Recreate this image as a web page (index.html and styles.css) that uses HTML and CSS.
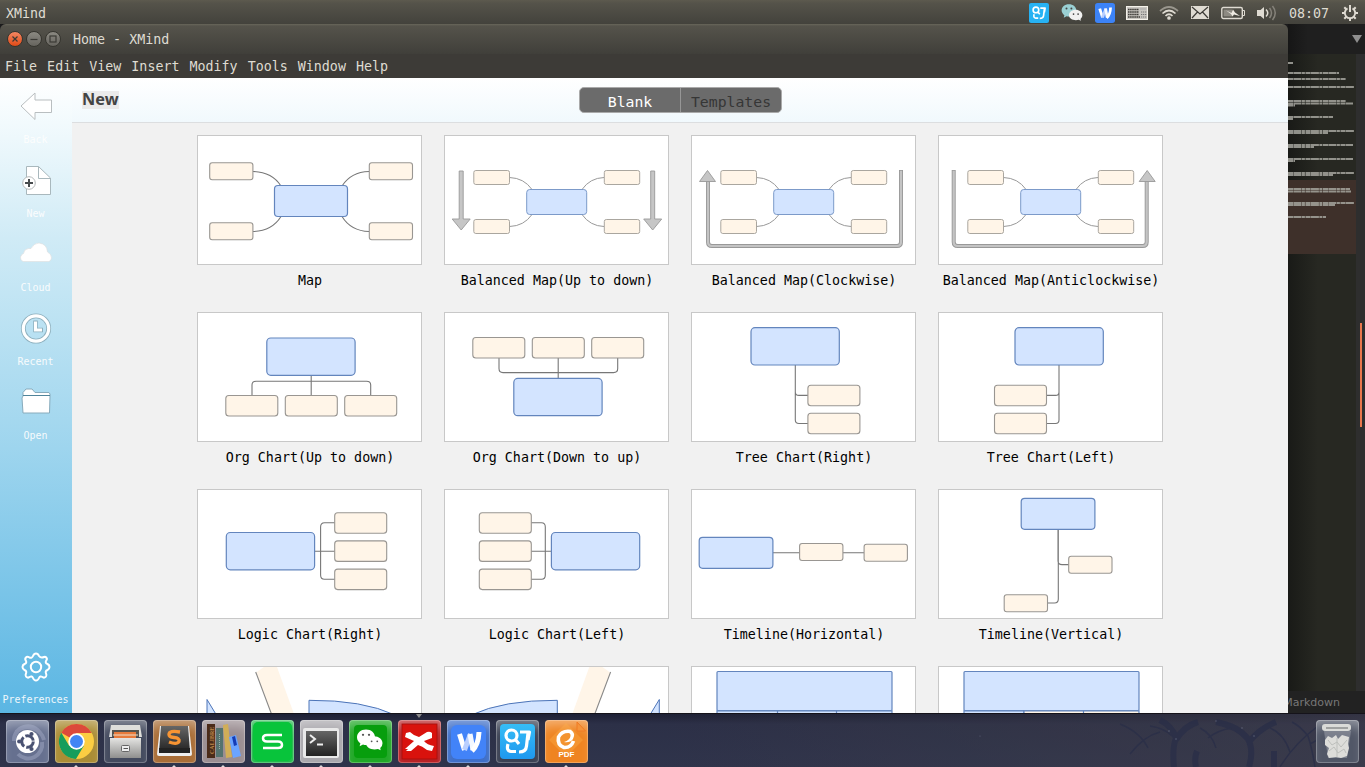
FILE: index.html
```
<!DOCTYPE html>
<html lang="en">
<head>
<meta charset="utf-8">
<title>Home - XMind</title>
<link rel="stylesheet" href="styles.css">
</head>
<body>
<svg class="defs" width="0" height="0">
  <defs>
    <linearGradient id="metal" x1="0" y1="0" x2="0" y2="1"><stop offset="0" stop-color="#e4e4e2"/><stop offset="1" stop-color="#8f8f8e"/></linearGradient>
    <linearGradient id="dark" x1="0" y1="0" x2="0" y2="1"><stop offset="0" stop-color="#666"/><stop offset="1" stop-color="#222"/></linearGradient>
    <linearGradient id="sky" x1="0" y1="0" x2="0" y2="1"><stop offset="0" stop-color="#36bdf6"/><stop offset="1" stop-color="#1f98ef"/></linearGradient>
    <linearGradient id="haze" x1="0" y1="0" x2="1" y2="0"><stop offset="0" stop-color="#3d3c48" stop-opacity="0"/><stop offset="1" stop-color="#42404c" stop-opacity=".75"/></linearGradient>
    <g id="balanced">
      <g class="wire faint"><path d="M65.500 42.500Q80 43 88 54.500M65.500 91.500Q80 91 88 79.500M160 42.500Q146 43 138 54.500M160 91.500Q146 91 138 79.500"/></g>
      <g class="topic faint"><rect x="29.800" y="35.500" width="35.700" height="14" rx="2"/><rect x="29.800" y="84.500" width="35.700" height="14" rx="2"/><rect x="160.300" y="35.500" width="35.400" height="14" rx="2"/><rect x="160.300" y="84.500" width="35.400" height="14" rx="2"/></g>
      <g class="central faint"><rect x="82.700" y="54.500" width="60" height="25" rx="3"/></g>
    </g>
    <g id="down-arrow"><path d="M-2 36H2V84H9L0 95L-9 84H-2Z"/></g>
    <g id="clock-arrow">
      <path d="M17 46V107Q17 111 21 111H206Q210 111 210 107V35" fill="none" stroke="#999" stroke-width="4"/>
      <path d="M17 46V107Q17 111 21 111H206Q210 111 210 107V35.700" fill="none" stroke="#c4c4c4" stroke-width="2.200"/>
      <path d="M16.500 35.500L8.500 46.500H24.500Z" fill="#c6c6c6" stroke="#999" stroke-width=".9"/>
    </g>
    <g id="fish">
      <path d="M59 6.500L67 1H80L97 48H74Z" fill="#fff5e8"/>
      <path d="M58.700 6L74.500 48" fill="none" stroke="#888" stroke-width="1.100"/>
      <path d="M10 50V33.500L20 50M112 50V34.300Q166 34 198 49" fill="#d3e4ff" stroke="#4c74b8"/>
    </g>
    <g id="gq-mark" fill="none" stroke="#fff" stroke-width="3.200" stroke-linejoin="round">
      <circle cx="15.500" cy="15.500" r="5.500"/><path d="M19 19L23 24M12 24Q10 31 15 31.500H20M23 32Q30 32 30.500 26L32 13M24 12H33.500L32 20"/>
    </g>
    <g id="w-mark" fill="none" stroke-width="5"><path d="M12.500 14L17.500 30" stroke="#fff"/><path d="M17.500 30L23.500 14" stroke="#b9cfff"/><path d="M23 14L26 30" stroke="#f4f8ff"/><path d="M25 31Q31.500 25 32 12" stroke="#fff"/></g>
    <g id="bubbles">
      <path d="M14 9C7 9 2 13.500 2 19C2 22.500 4 25 6.500 27L5.500 31L10 28.500Q13 29.500 16 29C22 28 26 24 26 19C26 13.500 21 9 14 9Z"/>
      <path class="bubble-front" d="M25 18C31 18 36 22 36 27Q36 31 33 33L33.500 36L30 34.500C22 36.500 14 33 14 27C14 22 19 18 25 18Z"/>
      <g fill="#555"><circle cx="10" cy="16" r="1.500"/><circle cx="18" cy="16" r="1.500"/><circle cx="21.500" cy="24.500" r="1.200"/><circle cx="29" cy="24.500" r="1.200"/></g>
    </g>
  </defs>
</svg>

<header class="panel">
  <span class="panel-title">XMind</span>
  <div class="tray">
    <svg width="20" height="20" viewBox="2 2 39 39"><rect x="2" y="2" width="39" height="39" rx="4" fill="#27b2f3"/><use href="#gq-mark"/></svg>
    <svg width="22" height="19" viewBox="1 8 36 29" fill="#9ad0d3"><path d="M14 9C7 9 2 13.500 2 19C2 22.500 4 25 6.500 27L5.500 31L10 28.500Q13 29.500 16 29C22 28 26 24 26 19C26 13.500 21 9 14 9Z"/><path fill="#f1f1f0" d="M25 18C31 18 36 22 36 27Q36 31 33 33L33.500 36L30 34.500C22 36.500 14 33 14 27C14 22 19 18 25 18Z"/><g fill="#444"><circle cx="10" cy="16" r="1.600"/><circle cx="18" cy="16" r="1.600"/><circle cx="21.500" cy="25" r="1.400"/><circle cx="29" cy="25" r="1.400"/></g></svg>
    <svg width="20" height="20" viewBox="4 4 36 36"><rect x="4" y="4" width="36" height="36" rx="5" fill="#3c83f7"/><use href="#w-mark"/></svg>
    <svg width="22" height="14" viewBox="0 0 22 14"><rect x=".5" y=".5" width="21" height="13" fill="#c9c6c0" stroke="#f4f1e9"/><path d="M2 3.500H13M2 6H13M2 8.500H13M2 11H14" stroke="#3f3d38" stroke-width="1.600" stroke-dasharray="1.600 .5"/><path d="M15 6H21M15 8.500H21M15 11H21" stroke="#777" stroke-dasharray="1.300 .7"/><path d="M14 3H20" stroke="#aaa"/></svg>
    <svg width="20" height="16" viewBox="0 0 20 16" fill="none" stroke="#dfdbd2" stroke-width="1.700"><path d="M1 6Q10-2 19 6" stroke="#99968d"/><path d="M3.500 8.500Q10 2.500 16.500 8.500"/><path d="M6.500 11Q10 7.500 13.500 11"/><circle cx="10" cy="13" r="1" fill="#dfdbd2"/></svg>
    <svg width="18" height="13" viewBox="0 0 18 13"><rect width="18" height="13" fill="#dfdbd2"/><path d="M1 1L9 8L17 1M1 12L6.500 6M17 12L11.500 6" fill="none" stroke="#3d3b36" stroke-width="1.200"/></svg>
    <svg width="24" height="14" viewBox="0 0 24 14"><rect x=".8" y="1.500" width="20.500" height="11" rx="1.500" fill="none" stroke="#dfdbd2" stroke-width="1.400"/><rect x="2.500" y="3.500" width="9" height="7" fill="#8d8a82"/><path d="M22 4.500H23.500V9.500H22" fill="none" stroke="#dfdbd2"/><path d="M5 4.500L10.500 7L12 3.500L14 6.500L19 10L13 8.500L11.500 10.500L10 8Z" fill="#eeeae2"/></svg>
    <svg width="20" height="16" viewBox="0 0 20 16"><path d="M0 5H3.500L7 2V14L3.500 11H0Z" fill="#dfdbd2"/><path d="M9 4.500Q12.500 8 9 11.500" fill="none" stroke="#dfdbd2" stroke-width="1.500"/><path d="M12.500 3Q16.500 8 12.500 13M15.500 1Q21 8 15.500 15" fill="none" stroke="#85827a" stroke-width="1.500"/></svg>
    <span class="clock">08:07</span>
    <svg width="18" height="18" viewBox="-9 -9 18 18" fill="none" stroke="#dfdbd2"><path d="M-2.500-4.600A5.200 5.200 0 1 0 2.500-4.600" stroke-width="1.900"/><path d="M0-8V-1" stroke-width="2"/><path d="M-8 0H-5M5 0H8M-5.700 5.700L-4 4M5.700 5.700L4 4M0 8V5M-5.700-5.700L-4-4M5.700-5.700L4-4" stroke-width="2"/></svg>
  </div>
</header>

<div class="desktop">
  <section class="window">
    <div class="titlebar">
      <span class="ctl close"><svg width="8" height="8" viewBox="0 0 8 8"><path d="M1.500 1.500L6.500 6.500M6.500 1.500L1.500 6.500"/></svg></span>
      <span class="ctl"><svg width="8" height="8" viewBox="0 0 8 8"><path d="M.500 4.500H7.500"/></svg></span>
      <span class="ctl"><svg width="8" height="8" viewBox="0 0 8 8"><rect x="1" y="1" width="6" height="6"/></svg></span>
      <span class="window-title">Home - XMind</span>
    </div>
    <nav class="menubar"><span>File</span><span>Edit</span><span>View</span><span>Insert</span><span>Modify</span><span>Tools</span><span>Window</span><span>Help</span></nav>
    <div class="client">
      <aside class="sidebar">
        <div class="side-item"><svg width="36" height="36" viewBox="0 0 36 36"><path d="M3 17L17 4V11H33.500V23.500H17V30.500Z" fill="#fff" stroke="#b9bec0"/></svg><span>Back</span></div>
        <div class="side-item"><svg width="36" height="36" viewBox="0 0 36 36"><path d="M8.500 3.500H20.500L32.500 15V31.500H8.500Z" fill="#fff" stroke="#a9b8bd" stroke-linejoin="round"/><path d="M20.500 3.500V15.500H32" fill="none" stroke="#a9b8bd"/><circle cx="11" cy="20" r="6.300" fill="#fff" stroke="#b5b9ba"/><path d="M7 20H15M11 16V24" stroke="#474b4d" stroke-width="2"/></svg><span>New</span></div>
        <div class="side-item"><svg width="36" height="36" viewBox="0 0 36 36"><path d="M5 24.500Q2 23 2.500 20Q3.500 17 5.500 16.500Q6 12 10.500 11.500H13Q16 6 21 6Q29 7 29.500 15Q33.500 17 33.500 21Q33 24 31 24.500Z" fill="#fff" stroke="#ddd" stroke-width=".6"/></svg><span>Cloud</span></div>
        <div class="side-item"><svg width="36" height="36" viewBox="0 0 36 36"><circle cx="18" cy="17.500" r="12.700" fill="none" stroke="#8dafbd" stroke-width="4.800"/><circle cx="18" cy="17.500" r="12.700" fill="none" stroke="#fff" stroke-width="3.200"/><path d="M17.500 9.500V19H25" fill="none" stroke="#8dafbd" stroke-width="4.500"/><path d="M17.500 10.500V19H24" fill="none" stroke="#fff" stroke-width="3"/></svg><span>Recent</span></div>
        <div class="side-item"><svg width="36" height="36" viewBox="0 0 36 36"><path d="M5 11V7.500L8 4H14L17 7.500H31L32 9V11L31.500 28H5L4 13Z" fill="#fff" stroke="#88abbc" stroke-linejoin="round"/><path d="M5 10.500H32" stroke="#50849a"/></svg><span>Open</span></div>
        <div class="side-item preferences"><svg width="36" height="36" viewBox="-18 -18 36 36" fill="none" stroke="#fff" stroke-width="2"><path d="M-3-11Q-2-13.500 0-13.500T3-11Q5-8.500 8-10Q10-10.500 10.500-9Q11.500-8 10-6Q9-4 11.500-3Q13.500-2 13.500 0T11.500 3Q9 4 10 6.500Q11 8.500 10 9.500Q8.500 11.500 6.500 10Q4 8.500 3 11Q2 13.500 0 13.500T-3 11Q-4 8.500-6.500 10Q-8.500 11.500-10 9.500Q-11 8.500-10 6.500Q-9 4-11.500 3Q-13.500 2-13.500 0T-11.500-3Q-9-4-10-6Q-11.500-8-10-9.500Q-9-11-6.500-9.500Q-4-8.500-3-11Z"/><circle r="5.200"/></svg><span>Preferences</span></div>
      </aside>
      <main class="content">
        <div class="toolbar"><h1>New</h1><div class="tabs"><span class="tab active">Blank</span><span class="tab">Templates</span></div></div>
        <div class="gallery">
          <figure><svg viewBox="1 1 223 128"><g class="wire"><path d="M56 36.500Q75 37 84 51M56 96.500Q75 96 84 81.500M172 36.500Q154 37 145 51M172 96.500Q154 96 145 81.500"/></g><g class="topic"><rect x="12.700" y="27.800" width="43.200" height="17" rx="2.500"/><rect x="172.300" y="27.800" width="43.200" height="17" rx="2.500"/><rect x="12.700" y="87.800" width="43.200" height="17" rx="2.500"/><rect x="172.300" y="87.800" width="43.200" height="17" rx="2.500"/></g><g class="central"><rect x="77.500" y="50.500" width="73" height="31" rx="3.500"/></g></svg><figcaption>Map</figcaption></figure>
          <figure><svg viewBox="1 1 223 128"><use href="#balanced"/><g class="arrow"><use href="#down-arrow" x="17.200"/><use href="#down-arrow" x="208.700"/></g></svg><figcaption>Balanced Map(Up to down)</figcaption></figure>
          <figure><svg viewBox="1 1 223 128"><use href="#balanced"/><use href="#clock-arrow"/></svg><figcaption>Balanced Map(Clockwise)</figcaption></figure>
          <figure><svg viewBox="1 1 223 128"><use href="#balanced"/><use href="#clock-arrow" transform="matrix(-1 0 0 1 225.700 0)"/></svg><figcaption>Balanced Map(Anticlockwise)</figcaption></figure>

          <figure><svg viewBox="1 1 223 128"><g class="wire"><path d="M114.200 63V84M55 84V73Q55 69.300 59 69.300H169.500Q173.700 69.300 173.700 73V84"/></g><g class="topic"><rect x="28.800" y="83.500" width="52" height="20.500" rx="3"/><rect x="88.300" y="83.500" width="52" height="20.500" rx="3"/><rect x="147.700" y="83.500" width="52" height="20.500" rx="3"/></g><g class="central"><rect x="69.800" y="26" width="88.300" height="37.300" rx="4"/></g></svg><figcaption>Org Chart(Up to down)</figcaption></figure>
          <figure><svg viewBox="1 1 223 128"><g class="wire"><path d="M114.200 46V67M55 46V56.500Q55 60.600 59 60.600H169.500Q173.700 60.600 173.700 56.500V46"/></g><g class="topic"><rect x="28.800" y="25.500" width="52" height="20.500" rx="3"/><rect x="88.300" y="25.500" width="52" height="20.500" rx="3"/><rect x="147.700" y="25.500" width="52" height="20.500" rx="3"/></g><g class="central"><rect x="69.800" y="66.400" width="88.300" height="37.300" rx="4"/></g></svg><figcaption>Org Chart(Down to up)</figcaption></figure>
          <figure><svg viewBox="1 1 223 128"><g class="wire"><path d="M104.300 53V80Q104.300 83.400 108 83.400H117M104.300 53V108Q104.300 111.500 108 111.500H117"/></g><g class="topic"><rect x="116.900" y="73.200" width="52" height="20.500" rx="3"/><rect x="116.900" y="101.200" width="52" height="20.500" rx="3"/></g><g class="central"><rect x="60" y="15.700" width="88.300" height="37.300" rx="4"/></g></svg><figcaption>Tree Chart(Right)</figcaption></figure>
          <figure><svg viewBox="1 1 223 128"><g class="wire"><path d="M121 53V80Q121 83.400 117.500 83.400H108M121 53V108Q121 111.500 117.500 111.500H108"/></g><g class="topic"><rect x="56.500" y="73.200" width="52" height="20.500" rx="3"/><rect x="56.500" y="101.200" width="52" height="20.500" rx="3"/></g><g class="central"><rect x="77" y="15.700" width="88.300" height="37.300" rx="4"/></g></svg><figcaption>Tree Chart(Left)</figcaption></figure>

          <figure><svg viewBox="1 1 223 128"><g class="wire"><path d="M117.500 62.200H138M138 33.800H127.500Q123.600 33.800 123.600 38V86Q123.600 90.300 127.500 90.300H138"/></g><g class="topic"><rect x="137.700" y="23.700" width="52" height="20.500" rx="3"/><rect x="137.700" y="51.900" width="52" height="20.500" rx="3"/><rect x="137.700" y="80.100" width="52" height="20.500" rx="3"/></g><g class="central"><rect x="29.300" y="43.500" width="88.300" height="37.300" rx="4"/></g></svg><figcaption>Logic Chart(Right)</figcaption></figure>
          <figure><svg viewBox="1 1 223 128"><g class="wire"><path d="M107.500 62.200H87M87 33.800H97.500Q101.300 33.800 101.300 38V86Q101.300 90.300 97.500 90.300H87"/></g><g class="topic"><rect x="35.300" y="23.700" width="52" height="20.500" rx="3"/><rect x="35.300" y="51.900" width="52" height="20.500" rx="3"/><rect x="35.300" y="80.100" width="52" height="20.500" rx="3"/></g><g class="central"><rect x="107.400" y="43.500" width="88.300" height="37.300" rx="4"/></g></svg><figcaption>Logic Chart(Left)</figcaption></figure>
          <figure><svg viewBox="1 1 223 128"><g class="wire"><path d="M82 63.700H109M152 63.700H173"/></g><g class="topic"><rect x="108.600" y="54.500" width="43.300" height="17" rx="2.500"/><rect x="173.100" y="55.200" width="43.300" height="17" rx="2.500"/></g><g class="central"><rect x="8.200" y="48.300" width="73.700" height="31" rx="3.500"/></g></svg><figcaption>Timeline(Horizontal)</figcaption></figure>
          <figure><svg viewBox="1 1 223 128"><g class="wire"><path d="M120 40V72Q120 75.600 124 75.600H131M120.300 40V110Q120.300 114 116.500 114H109"/></g><g class="topic"><rect x="130.700" y="67.200" width="43.300" height="17" rx="2.500"/><rect x="66.200" y="105.700" width="43.300" height="17" rx="2.500"/></g><g class="central"><rect x="83.200" y="9.300" width="73.700" height="31" rx="3.500"/></g></svg><figcaption>Timeline(Vertical)</figcaption></figure>

          <figure><svg viewBox="1 1 223 128"><use href="#fish"/></svg></figure>
          <figure><svg viewBox="1 1 223 128"><use href="#fish" transform="matrix(-1 0 0 1 225.300 0)"/></svg></figure>
          <figure><svg viewBox="1 1 223 128"><g class="central"><rect x="26" y="5.500" width="175" height="39" rx="1"/><path d="M26 44.800H201V90H26ZM86.500 44.800V90M145.500 44.800V90"/></g></svg></figure>
          <figure><svg viewBox="1 1 223 128"><g class="central"><rect x="26" y="5.500" width="175" height="39" rx="1"/><path d="M26 44.800H86V90H26Z"/><path d="M86 44.800H201V90H86ZM145.500 44.800V90" class="cells"/></g></svg></figure>
        </div>
      </main>
    </div>
  </section>
  <aside class="editor">
    <div class="editor-tabs"><svg width="10" height="8" viewBox="0 0 10 8"><path d="M0 0H10L5 8Z" fill="#8e8e8e"/></svg></div>
    <div class="editor-body">
      <svg class="minimap" width="68" height="637" viewBox="0 0 68 637">
        <path d="M0 126H68V200H0Z" fill="#3e302a"/>
        <g class="code-lines"><path d="M0 9H5M0 19H51M0 25H58M0 33H66M0 47H58M0 49.500H65M0 51.500H7M0 63H45M0 65H5M0 77H66M0 79H40M0 91H65M0 93H26M0 105H65M0 107H7M0 119H66M0 121H45M0 135H62M0 137.500H63M0 149H66M0 151H47M0 163H38"/></g>
      </svg>
      <span class="scroll-thumb"></span>
    </div>
    <div class="statusbar">Markdown</div>
  </aside>
</div>

<footer class="dock">
  <svg class="trees" width="1365" height="53" viewBox="0 0 1365 53"><rect x="600" width="765" height="53" fill="url(#haze)"/><g fill="none" stroke="#2c3048"><path d="M1174 53Q1172 34 1176 24Q1172 12 1160 6M1176 26Q1184 12 1198 8M1196 53Q1194 44 1197 37M1249 53Q1254 36 1248 25Q1238 12 1216 8M1249 28Q1260 14 1276 8M1274 53V37" stroke-width="6"/><path d="M1315 53Q1312 34 1308 22Q1300 12 1292 8M1280 53Q1294 30 1318 12M1290 38Q1284 20 1270 14M1232 14Q1218 16 1208 24M1310 30Q1326 22 1336 12M1200 14Q1212 20 1216 34M1150 12Q1164 14 1172 22M1130 40Q1144 22 1160 18M1120 10Q1140 18 1148 34" stroke-width="1.500"/></g><g fill="#8a91a8" opacity=".6"><circle cx="1169" cy="17" r=".8"/><circle cx="1176" cy="25" r=".8"/><circle cx="1242" cy="14" r=".8"/><circle cx="1254" cy="22" r=".8"/><circle cx="1216" cy="7" r=".7"/><circle cx="980" cy="22" r=".6"/></g></svg>
  <div class="launchers">
    <div class="launcher ubuntu"><svg viewBox="0 0 43 43"><path d="M8 21A14 14 0 0 1 34 13M36 22A14 14 0 0 1 12 34M10 12A17 17 0 0 1 38 20" fill="none" stroke="#b9c1da" stroke-opacity=".35" stroke-width="4"/><circle cx="21.500" cy="21.500" r="11.500" fill="#fff"/><circle cx="21.500" cy="21.500" r="5.800" fill="none" stroke="#4a5272" stroke-width="3" stroke-dasharray="10.200 2"/><g fill="#4a5272"><circle cx="13.200" cy="21.500" r="2.100"/><circle cx="25.500" cy="14" r="2.100"/><circle cx="25.500" cy="29" r="2.100"/></g></svg></div>
    <div class="launcher chrome running"><svg viewBox="0 0 43 43"><circle cx="21.500" cy="21.500" r="17.500" fill="#fbcd42"/><path d="M21.500 21.500L6.300 12.700A17.500 17.500 0 0 1 36.700 13H21.500Z" fill="#dc493b"/><path d="M6.300 12.700A17.500 17.500 0 0 0 21 39L29 25.500L21.500 29L14 25.500Z" fill="#179d5c"/><circle cx="21.500" cy="21.500" r="8.200" fill="#fff"/><circle cx="21.500" cy="21.500" r="6.500" fill="#4285f4"/></svg></div>
    <div class="launcher files"><svg viewBox="0 0 43 43"><path d="M7 5H36L38 17H5Z" fill="#dededb"/><path d="M8 10H35V17H8Z" fill="#54544f"/><path d="M10 12H32V18H10Z" fill="#e77b3c"/><path d="M9 15H34" stroke="#eee2cd"/><path d="M6 18H37V38H6Z" fill="url(#metal)"/><rect x="17.500" y="25.500" width="8" height="6" rx="1" fill="#eee" stroke="#666"/><path d="M19.500 28.500H24" stroke="#555"/></svg></div>
    <div class="launcher sublime running"><svg viewBox="0 0 43 43"><path d="M7 6H36L39 34Q39 36 37 36H6Q4 36 4 34Z" fill="#eee"/><path d="M8 6H35L37 32H6Z" fill="url(#dark)"/><path d="M6 28L37 28V33H6Z" fill="#222"/><path d="M27 12Q16 10 16 14.500Q16 17 21 17.500Q27 18 26 21.500Q24 25 16 22" fill="none" stroke="#f79433" stroke-width="3.400"/></svg></div>
    <div class="launcher calibre running"><svg viewBox="0 0 43 43"><path d="M5 4H13V38H5Z" fill="#4b2b19"/><path d="M14 8H21V37H14Z" fill="#55736f"/><path d="M21 5L26 4L30 37L24 38Z" fill="#d1ae58"/><path d="M27 17L34 15L39 36L31 38Z" fill="#6ba4ff"/><path d="M30 17L33 16L35 25L32 26Z" fill="#153cb5"/><text x="-34" y="11.500" transform="rotate(-90)" class="spine">CALIBRE</text><path d="M17.500 14V30" stroke="#9bb1a6" stroke-dasharray="1 1"/></svg></div>
    <div class="launcher wps-s running"><svg viewBox="0 0 43 43"><rect x="2" y="2" width="39" height="39" rx="5" fill="#08c43b"/><path d="M31 15H16Q12 15 12 18.300Q12 21.500 16 21.500H27Q31 21.500 31 25Q31 28 27 28H12" fill="none" stroke="#fff" stroke-width="2.500"/></svg></div>
    <div class="launcher terminal running"><svg viewBox="0 0 43 43"><rect x="3" y="8" width="36" height="30" rx="2" fill="#e9e9e9"/><rect x="6" y="11" width="31" height="25" fill="url(#dark)"/><path d="M10 15L15 19L10 23" fill="none" stroke="#eee" stroke-width="2"/><path d="M17 24.500H23" stroke="#eee" stroke-width="2"/></svg></div>
    <div class="launcher wechat running"><svg viewBox="0 0 43 43"><rect x="5" y="5" width="33" height="33" rx="4" fill="#079e0d"/><g fill="#fff" transform="translate(6.500 2.500) scale(.75 .77)"><use href="#bubbles"/></g></svg></div>
    <div class="launcher xmind running focused"><svg viewBox="0 0 43 43"><rect x="4" y="4" width="35" height="35" fill="#d9120d" stroke="#a3100d" stroke-width=".8"/><path d="M8 13L12 12Q16 16 21 17L29 12Q32 11 34 13L34 18L26 21Q29 25 36 26L34 31L29 30Q24 26 20 25L13 31H8L10 29H7L16 21L7 17Z" fill="#fff"/></svg></div>
    <div class="launcher wps-w running"><svg viewBox="0 0 43 43"><rect x="4" y="5" width="35" height="34" rx="6" fill="#4283f8"/><use href="#w-mark"/></svg></div>
    <div class="launcher gq"><svg viewBox="0 0 43 43"><rect x="4" y="4" width="35" height="35" rx="4" fill="url(#sky)"/><use href="#gq-mark"/></svg></div>
    <div class="launcher foxit running"><svg viewBox="0 0 43 43"><path d="M21 3L38 20L21 37L4 20Z" fill="#ffb14d" opacity=".35"/><path d="M32 2L40.500 11H32Z" fill="#f5943b" stroke="#f07a24"/><path d="M26 11.500Q17 10 13.500 17Q12 25 19 27.500Q26 28 28.500 21" fill="none" stroke="#fff" stroke-width="3.600"/><path d="M26 10Q31 13 28 19Q25 23 19 22Q25 20 25.500 16Q26 13 22 12Z" fill="#fff"/><text x="21.500" y="37" class="pdf">PDF</text></svg></div>
  </div>
  <div class="launcher trash"><svg viewBox="0 0 43 43"><path d="M8 11H35L31 38H12Z" fill="#b9bcc2" opacity=".4"/><path d="M9 20L12 16L16 18L20 15L22 19L26 15L33 17L32 24L33 28L31 36L25 38L20 37L13 38L11 34L13 28L9 25Z" fill="#ddddda"/><path d="M12 20L16 25L21 22L25 27L31 20M13 31L18 27L22 33L28 29L30 33M21 18V37" fill="none" stroke="#bdbfbc"/><rect x="6" y="4" width="29" height="7" rx="3" fill="#dadbd8"/><path d="M10 8H32" stroke="#8b8e8e" stroke-width="1.500"/></svg></div>
</footer>
</body>
</html>
```
FILE: styles.css
```
* { box-sizing: border-box; }
body {
  margin: 0; width: 1365px; height: 767px; overflow: hidden;
  display: flex; flex-direction: column;
  background: #1b1b1c; color: #dfdbd2;
  font: 13.33px/16px "DejaVu Sans Mono", "Liberation Mono", monospace;
}
.defs { position: absolute; }
svg { display: block; flex: none; }

.panel {
  height: 24px; flex: none; display: flex; align-items: center; justify-content: space-between;
  padding: 1px 6px 0; background: linear-gradient(#5d5a4e, #55534a 3px, #43423c);
}
.panel-title { padding-top: 2px; }
.tray { display: flex; align-items: center; gap: 12px; }
.tray svg:nth-of-type(4) { margin: 0 -1px; }
.clock { padding-top: 2px; width: 40px; }

.desktop { height: 690px; flex: none; display: flex; border-bottom: 1px solid #15131a; }
.window { width: 1288px; flex: none; display: flex; flex-direction: column; }
.titlebar {
  height: 30px; flex: none; display: flex; align-items: center; gap: 4px; padding: 0 7px;
  background: linear-gradient(#68665a, #55534b 2px, #403f3a);
  border-radius: 6px 6px 0 0;
}
.ctl {
  width: 16px; height: 16px; margin-right: -1px; border-radius: 50%; border: 1px solid #36352f;
  display: grid; place-items: center; background: linear-gradient(#8b8982, #66645e);
}
.ctl:nth-child(n+2) { margin-left: 0; }
.ctl svg { fill: none; stroke: #3b3a35; stroke-width: 1.2; }
.ctl.close { background: linear-gradient(#f38763, #df4a16); }
.window-title { margin-left: 9px; padding-top: 2px; }
.menubar { height: 24px; flex: none; display: flex; align-items: center; gap: 10px; padding: 2px 0 0 5px; background: #3d3b37; }

.client { flex: 1; min-height: 0; display: flex; }
.sidebar {
  width: 72px; flex: none; display: flex; flex-direction: column; padding: 11px 1px 6px 0;
  background: linear-gradient(#fff, #f2fafd 45px, #d0ebf6 160px, #9ed5ee 370px, #5bb6e3);
  color: #fff; font-size: 10px; line-height: 13px;
}
.side-item { height: 74px; display: flex; flex-direction: column; align-items: center; gap: 8px; }
.side-item svg { margin-left: 1px; }
.side-item span { opacity: .9; }
.preferences { height: 58px; margin-top: auto; gap: 8px; }

.content { flex: 1; min-width: 0; background: #f1f1f1; display: flex; flex-direction: column; }
.toolbar {
  height: 45px; flex: none; display: flex; align-items: flex-start; padding: 10px 10px 0;
  background: linear-gradient(#fff, #f1f9fd); border-bottom: 1px solid #dcdee0;
}
.toolbar h1 {
  margin: 3px 0 0; width: 37px; height: 18px; background: #ebebeb; color: #444;
  font: bold 16.3px/17px "Noto Sans", sans-serif;
}
.tabs {
  margin: -1px 0 0 460px; width: 203px; height: 26px; display: flex;
  border: 1px solid #aaa; border-radius: 5px; background: #6b6b6b; font-size: 14.8px; line-height: 27px;
}
.tab { width: 100px; text-align: center; color: #363636; }
.tab.active { width: 101px; color: #fff; border-right: 1px solid #969696; }
.gallery {
  flex: 1; min-height: 0; overflow: hidden; padding: 12px 0 0 125px;
  display: grid; grid-template-columns: repeat(4, 225px); grid-auto-rows: 177px; column-gap: 22px; align-content: start;
}
figure { margin: 0; display: flex; flex-direction: column; align-items: center; color: #000; }
figure > svg { width: 225px; height: 130px; border: 1px solid #c8c8c8; background: #fff; }
figcaption { margin-top: 8px; padding-left: 1px; white-space: nowrap; }
.wire { fill: none; stroke: #777; stroke-width: 1.1; }
.topic { fill: #fff5e8; stroke: #999692; stroke-width: 1.1; }
.central { fill: #d3e4ff; stroke: #6385bd; stroke-width: 1.2; }
.faint { stroke-width: 1; }
.wire.faint { stroke: #999; }
.topic.faint { stroke: #aaa69f; }
.central.faint { stroke: #7c9ac9; }
.arrow { fill: #c6c6c6; stroke: #999; stroke-width: .9; }
.cells { fill: #fff5e8; }

.editor { width: 77px; flex: none; display: flex; flex-direction: column; background: #202020; }
.editor-tabs { height: 30px; flex: none; display: flex; justify-content: flex-end; align-items: center; padding-right: 3px; background: linear-gradient(90deg, #161616, #1f1f1f 20px); }
.editor-body { flex: 1; min-height: 0; display: flex; gap: 4px; background: #2e2e2e; }
.minimap { background: linear-gradient(90deg, #191a17, #272822 30px); }
.code-lines { stroke: #a5a59e; stroke-width: 2; stroke-dasharray: 5 .4 8 .5 3 .6; opacity: .85; }
.scroll-thumb { width: 2px; height: 104px; margin-top: 269px; background: #e8774d; }
.statusbar {
  height: 22px; flex: none; overflow: hidden; direction: rtl; padding-right: 25px; background: #222;
  color: #777; font: 11px/23px "DejaVu Sans", sans-serif;
}

.dock {
  flex: 1; min-height: 0; display: flex; justify-content: space-between; padding: 6px 6px 0; position: relative;
  background: linear-gradient(#1e2135, #2c3047 10px, #2f344b);
}
.trees { position: absolute; left: 0; top: 0; opacity: .8; }
.launchers { display: flex; gap: 6px; position: relative; }
.launcher {
  width: 43px; height: 43px; flex: none; border-radius: 4px; position: relative;
  box-shadow: inset 0 0 0 1px rgba(255,255,255,.25), inset 0 10px 12px -5px rgba(255,255,255,.4);
}
.launcher > svg { width: 100%; height: 100%; }
.running::after {
  content: ""; position: absolute; left: 18px; bottom: -5px;
  border: 3px solid transparent; border-top: 0; border-bottom: 3px solid #ddd;
}
.focused::before {
  content: ""; position: absolute; left: 18px; top: -6px;
  border: 3px solid transparent; border-bottom: 0; border-top: 4px solid #8c8b8b;
}
.ubuntu { background: #66708f; }
.chrome { background: #ab8d35; }
.files { background: #434a5e; }
.sublime { background: #a96d36; }
.calibre { background: #9b8e92; }
.wps-s { background: #21b94b; }
.terminal { background: #aaa8ad; }
.wechat { background: #21a827; }
.xmind { background: #b92226; }
.wps-w { background: #3f6fc8; }
.gq { background: #3b4153; }
.foxit { background: #ef8421; }
.trash { background: #515767; }
.spine { font: bold 6px "Liberation Serif", serif; fill: #bd8749; }
.pdf { font: bold 8px "Liberation Sans", sans-serif; fill: #fff; text-anchor: middle; }
```
